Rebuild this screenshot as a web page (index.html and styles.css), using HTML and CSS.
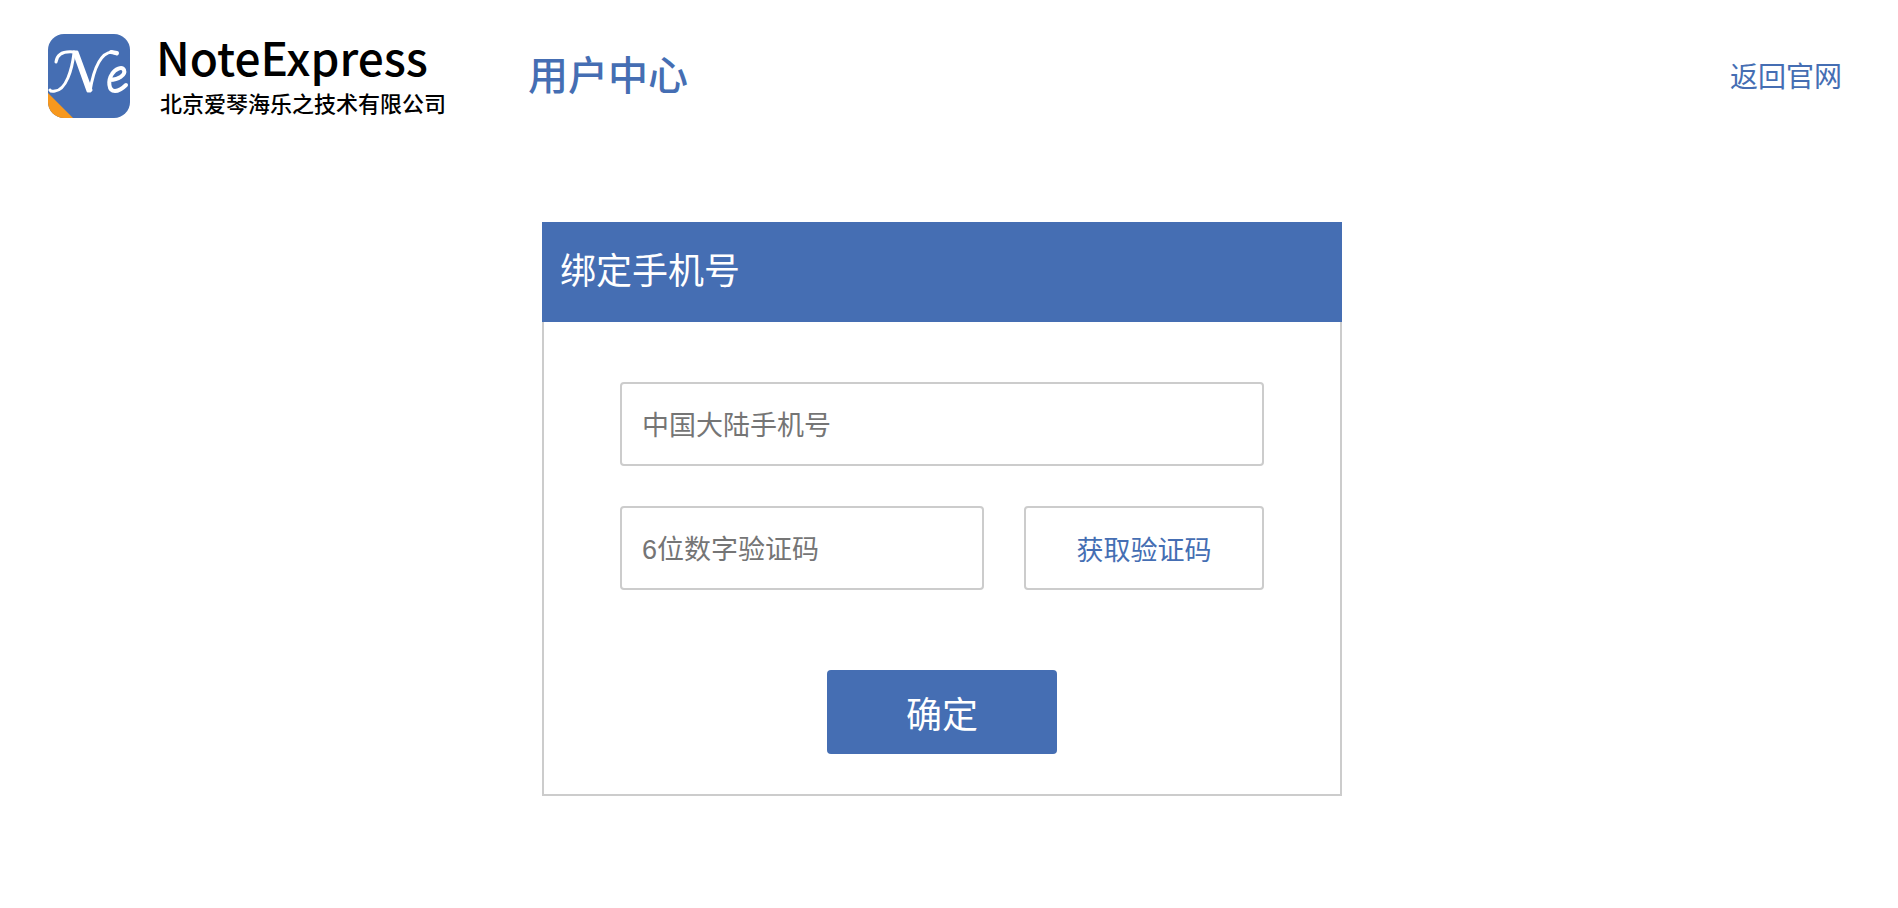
FILE: index.html
```html
<!DOCTYPE html>
<html lang="zh-CN">
<head>
  <meta charset="utf-8">
  <meta name="viewport" content="width=device-width, initial-scale=1">
  <title>绑定手机号 - 用户中心</title>
  <link rel="stylesheet" href="styles.css">
</head>
<body>
  <header class="site-header">
    <div class="brand">
      <svg class="brand-icon" viewBox="0 0 82 84" aria-hidden="true">
        <defs>
          <clipPath id="tile"><rect width="82" height="84" rx="16"/></clipPath>
        </defs>
        <g clip-path="url(#tile)">
          <rect width="82" height="84" fill="#456eb3"/>
          <path d="M0 59L25 84H0Z" fill="#f7981d"/>
        </g>
        <g fill="none" stroke="#fff" stroke-linecap="round" stroke-linejoin="round">
          <path d="M8 28C9 20 16 17 26 18" stroke-width="3"/>
          <path d="M26 19C24 36 18 56 7 57Q3 58 2 56" stroke-width="3"/>
          <path d="M26 18L29 18L43 56L40 57Z" fill="#fff" stroke-width="3"/>
          <path d="M42 57C45 39 51 19 64 18L69 20" stroke-width="3"/>
          <path d="M63 18L69 19" stroke-width="4"/>
          <path d="M62 46C70 46 78 41 76 36C74 32 67 35 64 40C60 46 60 57 67 57C72 57 75 54 78 51" stroke-width="4"/>
        </g>
      </svg>
      <div class="brand-text">
        <span class="brand-name">NoteExpress</span>
        <span class="brand-company">北京爱琴海乐之技术有限公司</span>
      </div>
    </div>
    <h1 class="site-title">用户中心</h1>
    <a class="home-link" href="#">返回官网</a>
  </header>
  <main class="page">
    <section class="card">
      <h2 class="card-title">绑定手机号</h2>
      <form class="bind-form">
        <input class="field" type="tel" placeholder="中国大陆手机号" aria-label="中国大陆手机号">
        <div class="code-row">
          <input class="field" type="text" inputmode="numeric" maxlength="6" placeholder="6位数字验证码" aria-label="6位数字验证码">
          <button class="code-button" type="button">获取验证码</button>
        </div>
        <button class="submit-button" type="submit">确定</button>
      </form>
    </section>
  </main>
</body>
</html>
```
FILE: styles.css
```css
* {
  box-sizing: border-box;
}

body {
  margin: 0;
  background: #fff;
  font-family: "Liberation Sans", "Noto Sans CJK SC", sans-serif;
}

.site-header {
  display: flex;
  align-items: center;
  padding: 26px 56px 0 48px;
}

.brand {
  display: flex;
  align-items: center;
  gap: 26px;
}

.brand-icon {
  width: 82px;
  height: 84px;
}

.brand-text {
  display: flex;
  flex-direction: column;
  width: 290px;
  padding-bottom: 8px;
  color: #000;
  font-family: "Noto Sans CJK SC", sans-serif;
  font-weight: 500;
  white-space: nowrap;
}

.brand-name {
  font-size: 46px;
  line-height: 60px;
}

.brand-company {
  padding-left: 4px;
  font-size: 22px;
  line-height: 32px;
}

.site-title {
  margin: 0 0 0 82px;
  color: #456eb3;
  font-size: 40px;
  font-weight: 500;
  line-height: 60px;
}

.home-link {
  margin-left: auto;
  padding-top: 4px;
  color: #456eb3;
  font-size: 28px;
  line-height: 40px;
  text-decoration: none;
}

.page {
  display: flex;
  justify-content: center;
  padding: 96px 14px 0 0;
}

.card {
  width: 800px;
  border: 2px solid #ccc;
  border-top: 0;
}

.card-title {
  margin: 0 -2px;
  padding: 0 18px;
  background: #456eb3;
  color: #fff;
  font-size: 36px;
  font-weight: 400;
  line-height: 100px;
}

.bind-form {
  display: flex;
  flex-direction: column;
  padding: 60px 76px 40px;
}

.field,
.code-button {
  height: 84px;
  border: 2px solid #ccc;
  border-radius: 4px;
  background: #fff;
  font: inherit;
  font-size: 27px;
}

.field {
  min-width: 0;
  padding: 4px 20px 0;
}

.field::placeholder {
  color: #757575;
}

.code-row {
  display: grid;
  grid-template-columns: 1fr 240px;
  gap: 40px;
  margin-top: 40px;
}

.code-button {
  color: #456eb3;
}

.submit-button {
  align-self: center;
  width: 230px;
  height: 84px;
  margin-top: 80px;
  border: 0;
  border-radius: 4px;
  background: #456eb3;
  color: #fff;
  font: inherit;
  font-size: 36px;
}
```
